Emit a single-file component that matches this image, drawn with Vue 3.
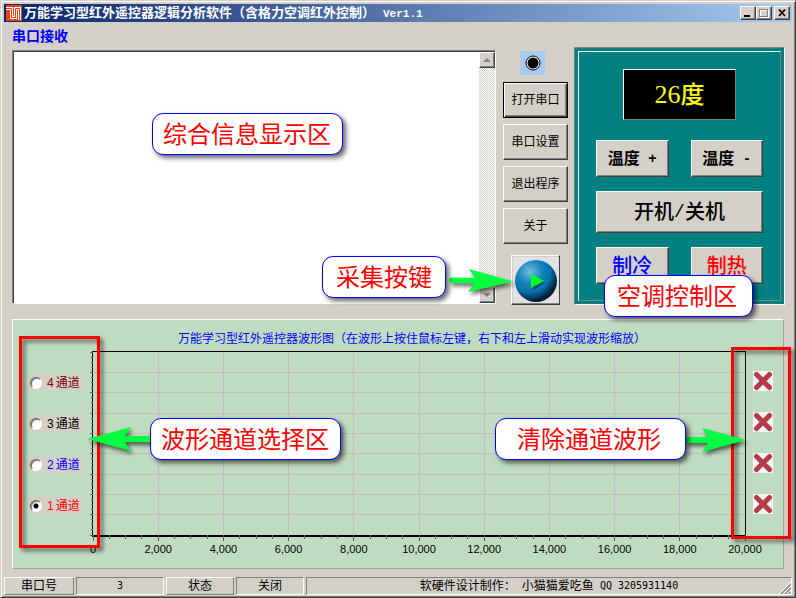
<script setup>
import { ref } from 'vue'

const received = ref('')
const channel = ref(1)
const temperature = ref(26)

const serialButtons = ['打开串口', '串口设置', '退出程序', '关于']
const channels = [
  { id: 4, color: 'maroon' },
  { id: 3, color: 'black' },
  { id: 2, color: 'blue' },
  { id: 1, color: 'red' },
]
const xLabels = Array.from({ length: 11 }, (_, i) => (i * 2000).toLocaleString('en-US'))
</script>

<template>
  <main class="window">
    <header class="titlebar">
      <svg class="app-icon" viewBox="0 0 16 16" aria-hidden="true">
        <rect width="16" height="16" fill="#f04010" />
        <path d="M0 3.5H5.5V12.5H9.5V3.5H13.5V15" fill="none" stroke="#fff" stroke-width="3" />
        <path d="M0 3.5H5.5V12.5H9.5V3.5H13.5V15" fill="none" stroke="#f04010" />
      </svg>
      <h1>万能学习型红外遥控器逻辑分析软件（含格力空调红外控制）<span class="ver">Ver1.1</span></h1>
      <div class="caption-buttons">
        <button class="cap" aria-label="最小化">
          <svg viewBox="0 0 12 10"><path d="M2 7h6v2H2z" fill="#000" /></svg>
        </button>
        <button class="cap" aria-label="最大化" disabled>
          <svg viewBox="0 0 12 10" fill="none" shape-rendering="crispEdges">
            <path d="M2.5 2.5h8v7h-8z" stroke="#fff" />
            <path d="M1.5 1.5h8v7h-8zM1.5 1h8" stroke="#808080" />
          </svg>
        </button>
        <button class="cap close" aria-label="关闭">
          <svg viewBox="0 0 12 10"><path d="M3 1.5l6 6.5M9 1.5L3 8" stroke="#000" stroke-width="1.8" /></svg>
        </button>
      </div>
    </header>

    <div class="body">
      <section class="top">
        <div class="receive">
          <label class="caption" for="received">串口接收</label>
          <div class="log">
            <textarea id="received" v-model="received" readonly></textarea>
            <div class="scrollbar">
              <button class="arrow" aria-label="向上滚动"><svg viewBox="0 0 8 4"><path d="M4 0l4 4H0z" /></svg></button>
              <button class="arrow" aria-label="向下滚动"><svg viewBox="0 0 8 4"><path d="M0 0h8L4 4z" /></svg></button>
            </div>
            <span class="callout c-info">综合信息显示区</span>
            <span class="callout c-sample">采集按键</span>
            <svg class="pointer p-sample" viewBox="0 0 66 24">
              <path d="M3 8.5L27 9L21 0L65 12.5L20 23L26 14.5L3 14A3 3 0 0 1 3 8.5z" />
            </svg>
          </div>
        </div>

        <div class="serial">
          <span class="led"><svg viewBox="0 0 16 16"><circle cx="8" cy="8" r="7" fill="#fff" stroke="#000" /><circle cx="8" cy="8" r="5.5" /></svg></span>
          <button v-for="(b, i) in serialButtons" :key="b" class="btn" :class="{ primary: i === 0 }">{{ b }}</button>
          <button class="btn sample" aria-label="采集">
            <svg viewBox="0 0 46 46">
              <defs>
                <radialGradient id="ball" cx="35%" cy="28%" r="75%">
                  <stop offset="0" stop-color="#78bce0" />
                  <stop offset=".4" stop-color="#1582bd" />
                  <stop offset=".65" stop-color="#0872ae" />
                  <stop offset=".9" stop-color="#02283f" />
                  <stop offset="1" stop-color="#001828" />
                </radialGradient>
              </defs>
              <rect width="46" height="46" fill="#e2e2e2" />
              <circle cx="23" cy="24" r="21" fill="url(#ball)" />
              <path d="M19 19L32 26L20 33z" fill="#00304c" opacity=".6" />
              <path d="M18 17L31 24L18 31z" fill="#0f2" />
            </svg>
          </button>
        </div>

        <div class="aircon">
          <div class="aircon-inner">
            <output class="lcd"><span class="digits">{{ temperature }}</span>度</output>
            <div class="keys">
              <button class="btn key" @click="temperature++">温度&nbsp;<span class="sign">+</span></button>
              <button class="btn key" @click="temperature--">温度&nbsp;<span class="sign">-</span></button>
              <button class="btn power">开机<span class="slash">/</span>关机</button>
              <button class="btn mode cool">制冷</button>
              <button class="btn mode heat">制热</button>
            </div>
          </div>
          <span class="callout c-aircon">空调控制区</span>
        </div>
      </section>

      <section class="chart">
        <h2>万能学习型红外遥控器波形图（在波形上按住鼠标左键，右下和左上滑动实现波形缩放）</h2>
        <div class="channels">
          <label v-for="c in channels" :key="c.id" :class="c.color">
            <input v-model="channel" type="radio" name="channel" :value="c.id" />
            <span class="number">{{ c.id }}</span>通道
          </label>
        </div>
        <svg class="plot" role="img" aria-label="波形图">
          <g class="grid">
            <line v-for="i in 9" :key="'v' + i" :x1="i * 10 + '%'" :x2="i * 10 + '%'" y1="0" y2="100%" />
            <line v-for="i in 8" :key="'h' + i" x1="0" x2="100%" :y1="i * 100 / 9 + '%'" :y2="i * 100 / 9 + '%'" />
          </g>
          <g class="ticks">
            <svg y="100%" overflow="visible">
              <line v-for="i in 41" :key="i" :x1="(i - 1) * 2.5 + '%'" :x2="(i - 1) * 2.5 + '%'" y1="0" :y2="(i - 1) % 4 ? 4 : 6" />
              <text v-for="(t, i) in xLabels" :key="t" :x="i * 10 + '%'" y="18">{{ t }}</text>
            </svg>
            <line v-for="i in 37" :key="'l' + i" :x1="(i - 1) % 4 ? -2 : -3" x2="0" :y1="(i - 1) * 100 / 36 + '%'" :y2="(i - 1) * 100 / 36 + '%'" />
          </g>
        </svg>
        <div class="clears">
          <button v-for="c in channels" :key="c.id" class="clear" :aria-label="'清除' + c.id + '通道'">
            <svg viewBox="0 0 20 20"><path d="M3.5 3.5L16.5 16.5M16.5 3.5L3.5 16.5" /></svg>
          </button>
        </div>

        <div class="frame f-left"></div>
        <div class="frame f-right"></div>
        <svg class="pointer p-left" viewBox="0 0 66 24">
          <path d="M1 12L45 0L39 9H66V15H39L45 24z" />
        </svg>
        <svg class="pointer p-right" viewBox="0 0 66 24">
          <path d="M61 12L17 0L23 9H0V15H23L17 24z" />
        </svg>
        <span class="callout c-channels">波形通道选择区</span>
        <span class="callout c-clear">清除通道波形</span>
      </section>
    </div>

    <footer class="status">
      <span class="cell raised">串口号</span>
      <span class="cell"><span class="mono">3</span></span>
      <span class="cell raised">状态</span>
      <span class="cell">关闭</span>
      <span class="cell">软硬件设计制作：<span class="mono">&nbsp;</span>小猫猫爱吃鱼<span class="mono">&nbsp;QQ 3205931140</span>
        <svg class="grip" viewBox="0 0 12 12"><path d="M0 12L12 0M4 12L12 4M8 12L12 8" stroke="#fff" /><path d="M1.5 12L12 1.5M2.5 12L12 2.5M5.5 12L12 5.5M6.5 12L12 6.5M9.5 12L12 9.5" stroke="#808080" /></svg>
      </span>
    </footer>
  </main>
</template>

<style>
body {
  margin: 0;
  background: #d4d0c8;
}
</style>

<style scoped>
* {
  box-sizing: border-box;
}
.window {
  display: flex;
  flex-direction: column;
  min-height: 100vh;
  padding: 3px;
  border: 1px solid;
  border-color: #d4d0c8 #404040 #404040 #d4d0c8;
  box-shadow: inset 1px 1px #fff, inset -1px -1px #808080;
  background: #d4d0c8;
  color: #000;
  font: 12px/16px "Liberation Sans", "Noto Sans CJK SC", sans-serif;
}
button {
  display: flex;
  align-items: center;
  justify-content: center;
  padding: 0;
  color: inherit;
  font: inherit;
  border: 0;
  border-radius: 0;
}
svg {
  display: block;
}
.titlebar {
  display: flex;
  align-items: center;
  height: 18px;
  padding: 0 2px;
  background: linear-gradient(90deg, #0a246a, #a6caf0);
  color: #fff;
}
.app-icon {
  width: 16px;
  height: 16px;
}
h1 {
  flex: 1;
  margin: 0 0 0 2px;
  font-size: 13px;
  line-height: 18px;
  font-weight: 700;
  white-space: nowrap;
}
.ver {
  margin-left: 8px;
  font-family: "Liberation Mono", monospace;
  font-size: 11px;
}
.caption-buttons {
  display: flex;
}
.cap,
.btn,
.arrow {
  background: #d4d0c8;
  border: 1px solid;
  border-color: #fff #404040 #404040 #fff;
  box-shadow: inset -1px -1px #808080;
}
.cap {
  width: 16px;
  height: 14px;
}
.cap svg {
  width: 12px;
  height: 10px;
}
.close {
  margin-left: 2px;
}
.body {
  flex: 1;
  padding: 0 8px 8px;
}
.top {
  display: grid;
  grid-template-columns: 1fr 65px 217px;
  margin-right: -1px;
}
.receive {
  padding-right: 7px;
}
.caption {
  display: block;
  color: #00f;
  font-size: 14px;
  line-height: 29px;
  height: 28px;
  font-weight: 700;
}
.log {
  position: relative;
  display: flex;
  height: 254px;
  border: 1px solid;
  border-color: #808080 #fff #fff #808080;
  box-shadow: inset 1px 1px #404040;
  background: #fff;
}
textarea {
  flex: 1;
  margin: 1px 0 0 1px;
  padding: 2px;
  border: 0;
  outline: 0;
  resize: none;
  background: transparent;
  font: inherit;
}
.scrollbar {
  display: flex;
  flex-direction: column;
  justify-content: space-between;
  width: 16px;
  margin: 1px 0 0 0;
  background: repeating-conic-gradient(#d4d0c8 0 25%, #fff 0 50%) 0 0 / 2px 2px;
}
.arrow {
  height: 16px;
}
.arrow svg {
  width: 8px;
  height: 4px;
  fill: #808080;
}
.serial {
  display: flex;
  flex-direction: column;
  gap: 6px;
  padding-top: 29px;
}
.led {
  display: flex;
  align-items: center;
  justify-content: center;
  width: 25px;
  height: 24px;
  margin: 0 auto 1px 17px;
  background: #a6caf0;
}
.led svg {
  width: 16px;
  height: 16px;
}
.serial .btn {
  height: 36px;
}
.serial .primary {
  outline: 1px solid #000;
  outline-offset: -1px;
  border-color: #000;
  box-shadow: inset 1px 1px #fff, inset -1px -1px #404040, inset -2px -2px #808080;
}
.serial .sample {
  width: 49px;
  height: 50px;
  margin: 5px 8px 0;
}
.sample svg {
  width: 46px;
  height: 46px;
}
.aircon {
  position: relative;
  height: 258px;
  margin: 25px 0 0 6px;
  padding: 3px;
  border: 1px solid;
  border-color: #808080 #fff #fff #808080;
  background: #008080;
}
.aircon-inner {
  height: 250px;
  padding: 17px 17px 0;
  border: 1px solid;
  border-color: #fff #808080 #808080 #fff;
}
.lcd {
  display: flex;
  align-items: center;
  justify-content: center;
  width: 113px;
  height: 51px;
  margin: 0 auto 20px;
  border: 1px solid;
  border-color: #fff #808080 #808080 #fff;
  background: #000;
  color: #ff0;
  font-size: 24px;
  font-weight: 500;
}
.digits {
  font-family: "Liberation Serif", serif;
  font-size: 26px;
}
.keys {
  display: grid;
  grid-template-columns: 1fr 1fr;
  grid-template-rows: 37px 42px 37px;
  gap: 14px 22px;
}
.key {
  font-size: 16px;
  font-weight: 700;
}
.sign {
  margin-left: 4px;
  font-family: "Liberation Mono", monospace;
  font-size: 14px;
}
.power {
  grid-column: 1 / -1;
  font-size: 20px;
  font-weight: 500;
}
.slash {
  font-family: "Liberation Mono", monospace;
  font-size: 18px;
}
.mode {
  font-size: 20px;
  font-weight: 500;
}
.cool,
.blue {
  color: #00f;
}
.heat,
.red {
  color: #f00;
}
.maroon {
  color: #800000;
}
.chart {
  position: relative;
  display: grid;
  grid-template-columns: 79px 1fr 37px;
  grid-template-rows: 31px 186px 31px;
  margin-top: 14px;
  border: 1px solid;
  border-color: #fff #a0a0a0 #a0a0a0 #fff;
  background: #c0dcc0;
}
h2 {
  grid-column: 2;
  margin: 0;
  padding: 4px 14px 0 0;
  color: #00f;
  font-size: 12px;
  line-height: 31px;
  font-weight: 400;
  text-align: center;
  white-space: nowrap;
}
.channels {
  grid-area: 2 / 1;
  display: flex;
  flex-direction: column;
  gap: 24px;
  padding: 23px 9px 0 16px;
}
.channels label {
  display: flex;
  align-items: center;
  height: 17px;
  background: #d4d0c8;
}
.number {
  margin: 0 2px 0 5px;
}
.channels input {
  appearance: none;
  flex: none;
  width: 12px;
  height: 12px;
  margin: 0 0 0 1px;
  border: 1px solid;
  border-color: #606060 #fff #fff #606060;
  border-radius: 50%;
  background: #fff;
  box-shadow: inset 1px 1px #808080;
}
.channels input:checked {
  background: radial-gradient(circle, #000 0 2px, #fff 3px);
}
.plot {
  grid-area: 2 / 2;
  width: 100%;
  height: 100%;
  overflow: visible;
  border: 1px solid #000;
  border-bottom-width: 2px;
}
.grid line,
.ticks line {
  shape-rendering: crispEdges;
  stroke: #c0bcc0;
}
.ticks line {
  stroke: #606060;
}
.ticks text {
  font-size: 11px;
  text-anchor: middle;
}
.clears {
  grid-area: 2 / 3;
  display: flex;
  flex-direction: column;
  gap: 21px;
  padding: 20px 0 0 7px;
}
.clear {
  width: 20px;
  height: 20px;
  background: #f4f4f6;
}
.clear svg {
  width: 20px;
  height: 20px;
  fill: none;
  stroke: #b43c48;
  stroke-width: 5;
  stroke-linecap: round;
}
.callout {
  position: absolute;
  z-index: 3;
  padding: 2px 11px 0 10px;
  border: 1px solid #00f;
  border-radius: 11px;
  background: #fff;
  box-shadow: 3px 3px 5px rgba(0, 0, 0, 0.6);
  color: #f00;
  font-size: 24px;
  line-height: 38px;
  white-space: nowrap;
}
.c-info {
  left: 139px;
  top: 62px;
}
.c-sample {
  right: 49px;
  top: 205px;
  padding: 2px 13px 0;
}
.c-aircon {
  right: 31px;
  top: 227px;
  padding: 2px 15px 0 12px;
}
.c-channels {
  left: 137px;
  top: 98px;
}
.c-clear {
  right: 97px;
  top: 98px;
  padding: 2px 24px 0 21px;
}
.pointer {
  position: absolute;
  z-index: 2;
  width: 66px;
  height: 24px;
  fill: #00ff40;
  filter: drop-shadow(2px 3px 2px rgba(0, 0, 0, 0.6));
}
.p-sample {
  right: -19px;
  top: 218px;
}
.p-left {
  left: 73px;
  top: 107px;
}
.p-right {
  right: 32px;
  top: 108px;
}
.frame {
  position: absolute;
  z-index: 1;
  border: 3px solid #f00;
  filter: drop-shadow(3px 3px 2px rgba(0, 0, 0, 0.6));
  pointer-events: none;
}
.f-left {
  left: 6px;
  top: 16px;
  width: 81px;
  height: 212px;
}
.f-right {
  right: -8px;
  top: 27px;
  width: 60px;
  height: 192px;
}
.status {
  display: grid;
  grid-template-columns: 70px 88px 68px 68px 1fr;
  gap: 2px;
  height: 17px;
}
.cell {
  position: relative;
  display: flex;
  align-items: center;
  justify-content: center;
  border: 1px solid;
  border-color: #808080 #fff #fff #808080;
}
.raised {
  border-color: #fff #808080 #808080 #fff;
}
.mono {
  font-family: "DejaVu Sans Mono", monospace;
  font-size: 10px;
}
.grip {
  position: absolute;
  right: 0;
  bottom: 0;
  width: 12px;
  height: 12px;
}
</style>
